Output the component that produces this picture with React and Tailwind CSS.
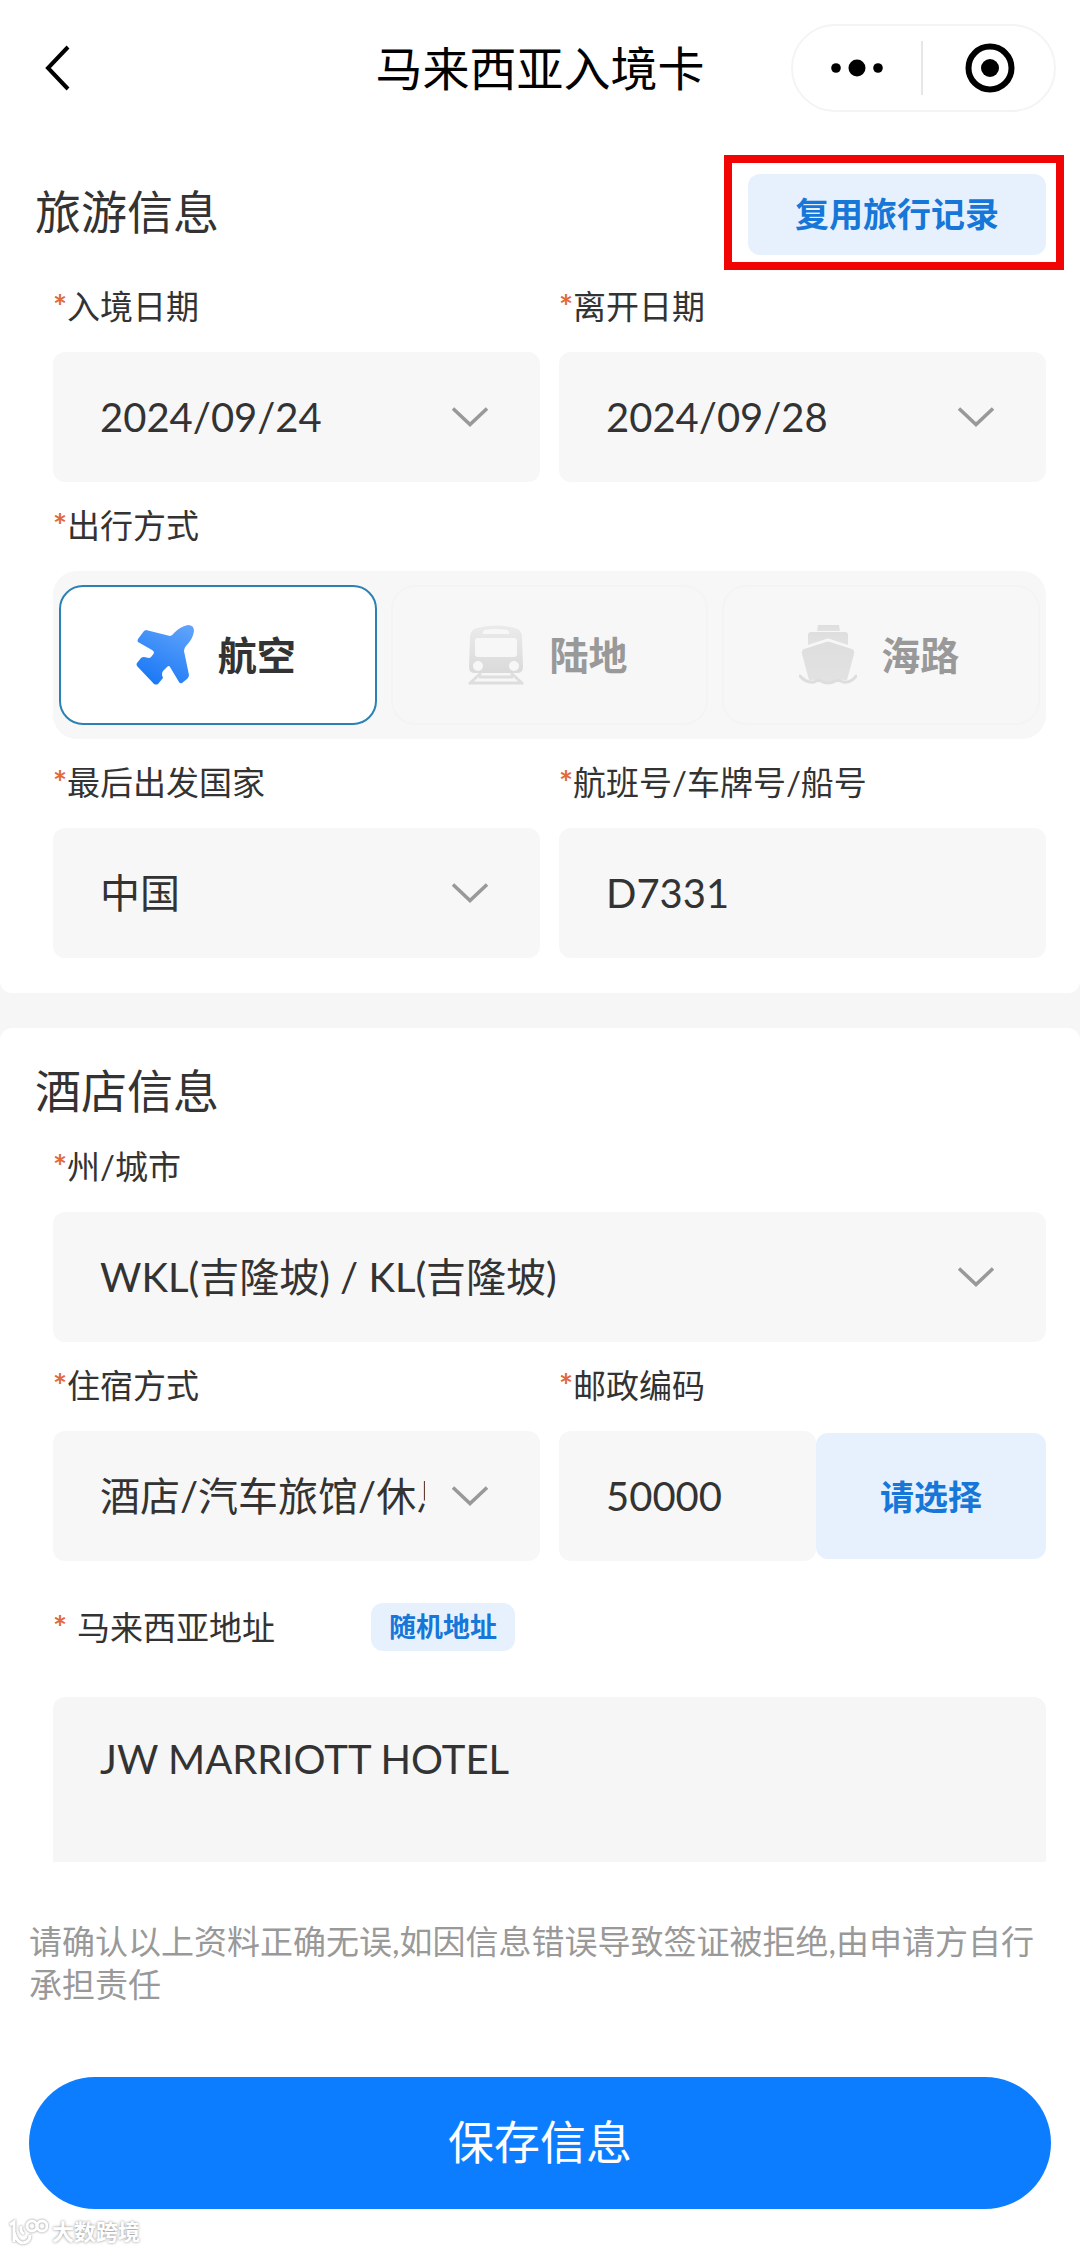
import React, { useState } from 'react';

const FIELD =
  'w-full h-[130px] rounded-xl bg-[#f7f7f7] pl-[47px] text-[40px] text-[#333333] outline-none';

function Label({ htmlFor, children, spaced }) {
  return (
    <label htmlFor={htmlFor} className="flex text-[33px] leading-[48px] text-[#333333]">
      <span className={spaced ? 'w-6 font-bold text-[#e0683a]' : 'w-[14px] font-bold text-[#e0683a]'}>
        *
      </span>
      {children}
    </label>
  );
}

function Chevron() {
  return (
    <svg
      viewBox="0 0 36 20"
      className="absolute right-[52px] top-1/2 -translate-y-1/2 w-9 h-5 pointer-events-none"
      fill="none"
      stroke="#999999"
      strokeWidth="3.5"
    >
      <path d="M1 1.5 L18 17.500 L35 1.5" />
    </svg>
  );
}

function SelectField({ id, label, options }) {
  return (
    <div className="flex flex-col gap-[22px] min-w-0">
      <Label htmlFor={id}>{label}</Label>
      <div className="relative">
        <select id={id} className={`${FIELD} appearance-none pr-[115px]`}>
          {options.map((o) => (
            <option key={o}>{o}</option>
          ))}
        </select>
        <Chevron />
      </div>
    </div>
  );
}

function PlaneIcon() {
  return (
    <svg viewBox="0 0 58 60" className="w-[58px] h-[60px]">
      <defs>
        <linearGradient id="plane" x1="0.8" y1="0" x2="0.3" y2="1">
          <stop offset="0" stopColor="#5ea2fb" />
          <stop offset="1" stopColor="#1a78f5" />
        </linearGradient>
      </defs>
      <path
        fill="url(#plane)"
        d="M10 5 L34 11 Q36 11 38 8 Q45 1 52 0 Q58 0 58 6 Q57 14 50 21 Q48 23 48 26 L53 50 Q53 52 51 54 L46 58 Q44 59 43 57 L34 42 Q33 40 31 42 L27 46 Q26 47 26 50 L27 53 L22 59 Q20 60 18 59 L1 41 Q0 39 1 38 L5 33 Q6 32 8 32 L13 33 Q15 33 18 28 Q18 26 16 25 L2 17 Q1 16 2 14 L8 6 Z"
      />
    </svg>
  );
}

function TrainIcon() {
  return (
    <svg viewBox="0 0 58 60" className="w-[58px] h-[60px]">
      <defs>
        <linearGradient id="train" x1="0" y1="0" x2="0" y2="1">
          <stop offset="0" stopColor="#ebebeb" />
          <stop offset="1" stopColor="#dadada" />
        </linearGradient>
      </defs>
      <path
        fill="url(#train)"
        fillRule="evenodd"
        d="M10 3 Q28 -2 48 3 Q55 5 55 12 L56 42 Q56 48 50 48 L8 48 Q2 48 2 42 L3 12 Q3 5 10 3 Z M18 5 Q15 6 16 9 L42 9 Q43 6 40 5 Q28 3 18 5 Z M10 13 Q8 13 8 16 L8 29 Q8 32 11 32 L47 32 Q50 32 50 29 L50 16 Q50 13 47 13 Z M11 36 A5 5 0 1 0 11 46 A5 5 0 1 0 11 36 Z M47 36 A5 5 0 1 0 47 46 A5 5 0 1 0 47 36 Z"
      />
      <path
        fill="none"
        stroke="#dedede"
        strokeWidth="3"
        d="M14 48 L2 59 M44 48 L56 59 M12 52 H46 M3 58 H55"
      />
    </svg>
  );
}

function ShipIcon() {
  return (
    <svg viewBox="0 0 58 60" className="w-[58px] h-[60px]">
      <defs>
        <linearGradient id="ship" x1="0" y1="0" x2="0" y2="1">
          <stop offset="0" stopColor="#dedede" />
          <stop offset="1" stopColor="#e2e2e2" />
        </linearGradient>
      </defs>
      <g fill="url(#ship)">
        <path d="M19 0 H40 L41 6 H18 Z" />
        <path d="M12 7 H46 Q49 7 49 10 V20 L31 14 Q29 13 27 14 L9 20 V10 Q9 7 12 7 Z" />
        <path d="M27 17 Q29 16 31 17 L53 24 Q56 26 55 29 L48 55 Q38 54 34 57 Q29 59 24 57 Q19 54 10 55 L3 29 Q2 26 5 24 Z" />
      </g>
      <path
        fill="none"
        stroke="#dddddd"
        strokeWidth="3"
        strokeLinecap="round"
        d="M1 51 Q7 58 15 57 Q20 54 24 57 Q29 59 34 57 Q39 54 44 57 Q52 58 57 51"
      />
    </svg>
  );
}

const MODES = [
  { id: 'air', name: '航空', icon: <PlaneIcon /> },
  { id: 'land', name: '陆地', icon: <TrainIcon /> },
  { id: 'sea', name: '海路', icon: <ShipIcon /> },
];

function TravelMode() {
  const [mode, setMode] = useState('air');
  return (
    <fieldset className="min-w-0">
      <legend className="flex mb-[22px] text-[33px] leading-[48px] text-[#333333]">
        <span className="w-[14px] font-bold text-[#e0683a]">*</span>
        出行方式
      </legend>
      <div className="grid grid-cols-3 gap-[14px] h-[168px] rounded-3xl bg-[#f7f7f7] px-[6px] py-[14px]">
        {MODES.map((m) => (
          <label
            key={m.id}
            className={`relative flex items-center justify-center gap-6 rounded-3xl border-2 pr-1 text-[39px] font-bold ${
              mode === m.id
                ? 'border-[#2b80b4] bg-white text-[#333333]'
                : 'border-[#f4f4f4] text-[#999999]'
            }`}
          >
            <input
              type="radio"
              name="mode"
              className="sr-only"
              checked={mode === m.id}
              onChange={() => setMode(m.id)}
            />
            {m.icon}
            {m.name}
          </label>
        ))}
      </div>
    </fieldset>
  );
}

function Header() {
  return (
    <header className="grid grid-cols-[1fr_auto_1fr] items-center h-[136px] px-6">
      <button aria-label="返回" className="w-14 pl-5">
        <svg viewBox="0 0 28 46" className="w-7 h-[46px]" fill="none" stroke="#000" strokeWidth="4">
          <path d="M24 2 L4 23 L24 44" />
        </svg>
      </button>
      <h1 className="text-[47px] leading-[64px] text-black">马来西亚入境卡</h1>
      <div className="justify-self-end flex items-center w-[265px] h-[88px] rounded-full border-2 border-[#f4f4f4]">
        <button aria-label="更多" className="flex-1 flex justify-center">
          <svg viewBox="0 0 54 18" className="w-[54px] h-[18px]">
            <circle cx="6" cy="9" r="4.800" />
            <circle cx="27" cy="9" r="8.500" />
            <circle cx="48" cy="9" r="4.800" />
          </svg>
        </button>
        <span className="w-[2px] h-[54px] bg-[#e6e6e6]" />
        <button aria-label="关闭" className="flex-1 flex justify-center pl-1">
          <svg viewBox="0 0 50 50" className="w-[50px] h-[50px]">
            <circle cx="25" cy="25" r="21.500" fill="none" stroke="#000" strokeWidth="6" />
            <circle cx="25" cy="25" r="9" />
          </svg>
        </button>
      </div>
    </header>
  );
}

function Watermark() {
  return (
    <div className="absolute left-2 bottom-1 flex items-center gap-1 text-[22px] leading-7 font-bold text-white [text-shadow:0_0_3px_#888888]">
      <svg
        viewBox="0 0 40 28"
        className="w-10 h-7 drop-shadow-[0_0_1px_#888888]"
        fill="none"
        stroke="#fff"
        strokeWidth="3"
      >
        <path d="M2 7 L6 4 V24 M6 14 Q9 25 15 25 Q22 24 22 17 M13 8 Q12 14 16 16" />
        <circle cx="24" cy="8" r="5" />
        <circle cx="34" cy="8" r="5" />
      </svg>
      <span>大数跨境</span>
    </div>
  );
}

export default function App() {
  return (
    <div className="relative bg-[#f6f6f6] font-['Lato','Noto_Sans_CJK_SC',sans-serif]">
      <div className="bg-white">
        <Header />
      </div>

      <section className="rounded-b-xl bg-white pb-[35px]">
        <div className="flex items-start justify-between pl-[35px] pr-4 pt-[19px]">
          <h2 className="pt-[25px] text-[46px] leading-[64px] text-[#333333]">旅游信息</h2>
          <div className="border-8 border-[#f00404] pt-[11px] pb-[7px] pl-4 pr-[10px]">
            <button className="w-[298px] h-[81px] rounded-xl bg-[#e7f1fd] pb-[2px] text-[34px] font-bold text-[#1677d9]">
              复用旅行记录
            </button>
          </div>
        </div>

        <div className="flex flex-col gap-[19px] pt-3 pl-[53px] pr-[34px]">
          <div className="grid grid-cols-2 gap-[19px]">
            <SelectField id="arrive" label="入境日期" options={['2024/09/24']} />
            <SelectField id="leave" label="离开日期" options={['2024/09/28']} />
          </div>
          <TravelMode />
          <div className="grid grid-cols-2 gap-[19px]">
            <SelectField id="country" label="最后出发国家" options={['中国']} />
            <div className="flex flex-col gap-[22px] min-w-0">
              <Label htmlFor="flight">航班号/车牌号/船号</Label>
              <input id="flight" defaultValue="D7331" className={FIELD} />
            </div>
          </div>
        </div>
      </section>

      <section className="mt-[35px] rounded-t-xl bg-white">
        <h2 className="pl-[35px] pt-[31px] text-[46px] leading-[64px] text-[#333333]">酒店信息</h2>
        <div className="flex flex-col gap-[19px] pt-[19px] pl-[53px] pr-[34px]">
          <SelectField id="city" label="州/城市" options={['WKL(吉隆坡) / KL(吉隆坡)']} />
          <div className="grid grid-cols-2 gap-[19px]">
            <SelectField id="stay" label="住宿方式" options={['酒店/汽车旅馆/休息室']} />
            <div className="flex flex-col gap-[22px] min-w-0">
              <Label htmlFor="postcode">邮政编码</Label>
              <div className="flex items-center">
                <input id="postcode" defaultValue="50000" className={`${FIELD} min-w-0 flex-1`} />
                <button className="w-[230px] h-[126px] rounded-xl bg-[#e7f1fd] text-[34px] font-bold text-[#1677d9]">
                  请选择
                </button>
              </div>
            </div>
          </div>
        </div>

        <div className="flex items-center gap-24 pt-[42px] pl-[53px]">
          <Label htmlFor="address" spaced>马来西亚地址</Label>
          <button className="w-36 h-12 rounded-xl bg-[#e7f1fd] text-[27px] font-bold text-[#1677d9]">
            随机地址
          </button>
        </div>
        <div className="pt-[46px] pl-[53px] pr-[34px]">
          <textarea
            id="address"
            defaultValue="JW MARRIOTT HOTEL"
            className="block w-full h-[165px] resize-none rounded-t-xl bg-[#f6f6f6] pl-[47px] pt-8 text-[40px] leading-[60px] text-[#333333] outline-none"
          />
        </div>
      </section>

      <footer className="bg-white px-[29px] pt-[58px] pb-[41px]">
        <p className="text-[33px] leading-[43px] text-[#999999]">
          请确认以上资料正确无误,如因信息错误导致签证被拒绝,由申请方自行承担责任
        </p>
        <button className="mt-[71px] w-full h-[132px] rounded-full bg-[#0d7dff] pb-1 text-[46px] text-white">
          保存信息
        </button>
      </footer>
      <Watermark />
    </div>
  );
}
